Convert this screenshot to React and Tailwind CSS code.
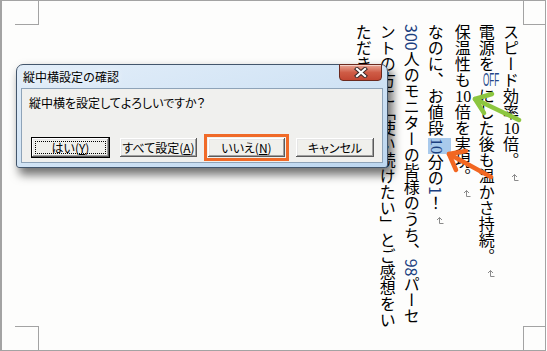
import React from "react";

const Ret = () => (
  <svg width="8" height="9" viewBox="0 0 8 9" className="inline-block mt-[5px]">
    <path d="M3.5 1.5 V7.5 H7.5 M1 4 L3.5 1.5 L6 4" stroke="#8a8a8a" strokeWidth="1" fill="none" />
  </svg>
);

const Tcy = ({ children }) => (
  <span className="[text-combine-upright:all] font-['Liberation_Serif',serif]">{children}</span>
);

const Btn = ({ children, wide }) => (
  <div
    className={
      "h-[19px] flex items-center justify-center bg-[#f0f0ec] text-[12px] leading-none text-black [font-feature-settings:'palt'] shadow-[inset_-1px_-1px_0_#5a5a5a,inset_1px_1px_0_#ffffff,inset_-2px_-2px_0_#a0a0a0,inset_2px_2px_0_#e6e6e6] " +
      (wide ? "w-[78px]" : "w-[77px]")
    }
  >
    {children}
  </div>
);

export default function App() {
  return (
    <div className="w-[547px] h-[351px] bg-white overflow-hidden">
      <div className="relative w-[546px] h-[351px] border-l-2 border-t border-r border-b border-[#a3a3a3] bg-[#fdfdfc] flex justify-end pt-[23px] pr-[22px] font-['Noto_Sans_CJK_JP','Noto_Sans',sans-serif] text-black">
        {/* crop marks */}
        <div className="absolute left-[13px] top-0 w-[24px] h-[24px] border-r border-b border-[#a3a3a3]" />
        <div className="absolute right-0 top-0 w-[22px] h-[24px] border-l border-b border-[#a3a3a3]" />
        <div className="absolute left-[13px] bottom-0 w-[24px] h-[24px] border-r border-t border-[#a3a3a3]" />
        <div className="absolute right-0 bottom-0 w-[22px] h-[24px] border-l border-t border-[#a3a3a3]" />

        {/* vertical text */}
        <div className="[writing-mode:vertical-rl] h-[305px] text-[16px] leading-[24px] whitespace-nowrap">
          <p>
            スピード効率<Tcy>10</Tcy>倍。<Ret />
          </p>
          <p>
            電源を
            <span className="inline-flex w-[16px] h-[16px] items-center justify-center [writing-mode:horizontal-tb] align-middle overflow-visible">
              <span className="inline-block scale-x-[0.45] text-[18px] leading-none text-[#23468a] font-['Liberation_Sans',sans-serif]">
                OFF
              </span>
            </span>
            にした後も温かさ持続。<Ret />
          </p>
          <p>
            保温性も<Tcy>10</Tcy>倍を実現。<Ret />
          </p>
          <p>
            なのに、お値段
            <span className="inline-block w-[23px] leading-[23px] py-[3px] mt-[2px] bg-[#a9caec] text-center font-['Liberation_Serif',serif] text-[#1b3f80]">
              10
            </span>
            分の<span className="text-[#1b3f80]">1</span>！<Ret />
          </p>
          <p>
            <span className="text-[#1b3f80]">300</span>人のモニターの皆様のうち、
            <span className="text-[#1b3f80]">98</span>パーセ
            <br />
            ントの方に「使い続けたい」とご感想をい
            <br />
            ただきました。<Ret />
          </p>
        </div>

        {/* annotation arrows */}
        <svg
          className="absolute left-[-2px] top-[-1px] pointer-events-none"
          width="547"
          height="351"
          viewBox="0 0 547 351"
        >
          <g stroke="#8cc63f" strokeWidth="4.5" strokeLinecap="round" strokeLinejoin="round" fill="none">
            <path d="M519 120 L475 99" />
            <path d="M492 94 L475 99 L484 113" />
          </g>
          <g stroke="#f26722" strokeWidth="4.5" strokeLinecap="round" strokeLinejoin="round" fill="none">
            <path d="M491 177 L449 154" />
            <path d="M466 151 L449 154 L456 170" />
          </g>
        </svg>

        {/* dialog */}
        <div className="absolute left-[14px] top-[63px] w-[372px] h-[104px] rounded-t-[7px] rounded-b-[3px] border border-[#43566c] bg-gradient-to-br from-[#e3eef9] via-[#d2e4f5] to-[#bcd6ef] shadow-[4px_6px_10px_1px_rgba(0,0,0,0.55)] flex flex-col">
          <div className="h-[23px] flex items-center pl-[6px] text-[12px] leading-none text-black [text-shadow:0_0_6px_#ffffff]">
            縦中横設定の確認
          </div>
          {/* close button */}
          <div className="absolute right-[5px] top-[-1px] w-[43px] h-[17px] rounded-b-[4px] border border-[#6b2a1f] bg-gradient-to-b from-[#e8a595] via-[#cf5c46] to-[#c24632] flex items-center justify-center shadow-[inset_0_1px_0_rgba(255,255,255,0.5)]">
            <svg width="14" height="11" viewBox="0 0 14 11">
              <path d="M3 2 L11 9 M11 2 L3 9" stroke="#3b2a2a" strokeWidth="4.2" strokeLinecap="square" />
              <path d="M3 2 L11 9 M11 2 L3 9" stroke="#ffffff" strokeWidth="2.2" strokeLinecap="square" />
            </svg>
          </div>
          <div className="mx-[4px] h-[75px] border border-[#8ea3b8] bg-[#f0f0ee] flex flex-col">
            <p className="pt-[6px] pl-[7px] text-[12px] leading-[16px] text-black [font-feature-settings:'palt']">
              縦中横を設定してよろしいですか？
            </p>
            <div className="mt-[26px] pl-[9px] flex items-center gap-[10px]">
              <div className="relative border border-black">
                <Btn>
                  はい(<span className="underline">Y</span>)
                </Btn>
                <div className="absolute inset-[3px] border border-dotted border-black" />
              </div>
              <Btn>
                すべて設定(<span className="underline">A</span>)
              </Btn>
              <div className="ml-[1px] outline-[3px] outline-[#f06a28] outline-offset-[1px]">
                <Btn>
                  いいえ(<span className="underline">N</span>)
                </Btn>
              </div>
              <div className="ml-[1px]">
                <Btn wide>キャンセル</Btn>
              </div>
            </div>
          </div>
        </div>
      </div>
    </div>
  );
}
